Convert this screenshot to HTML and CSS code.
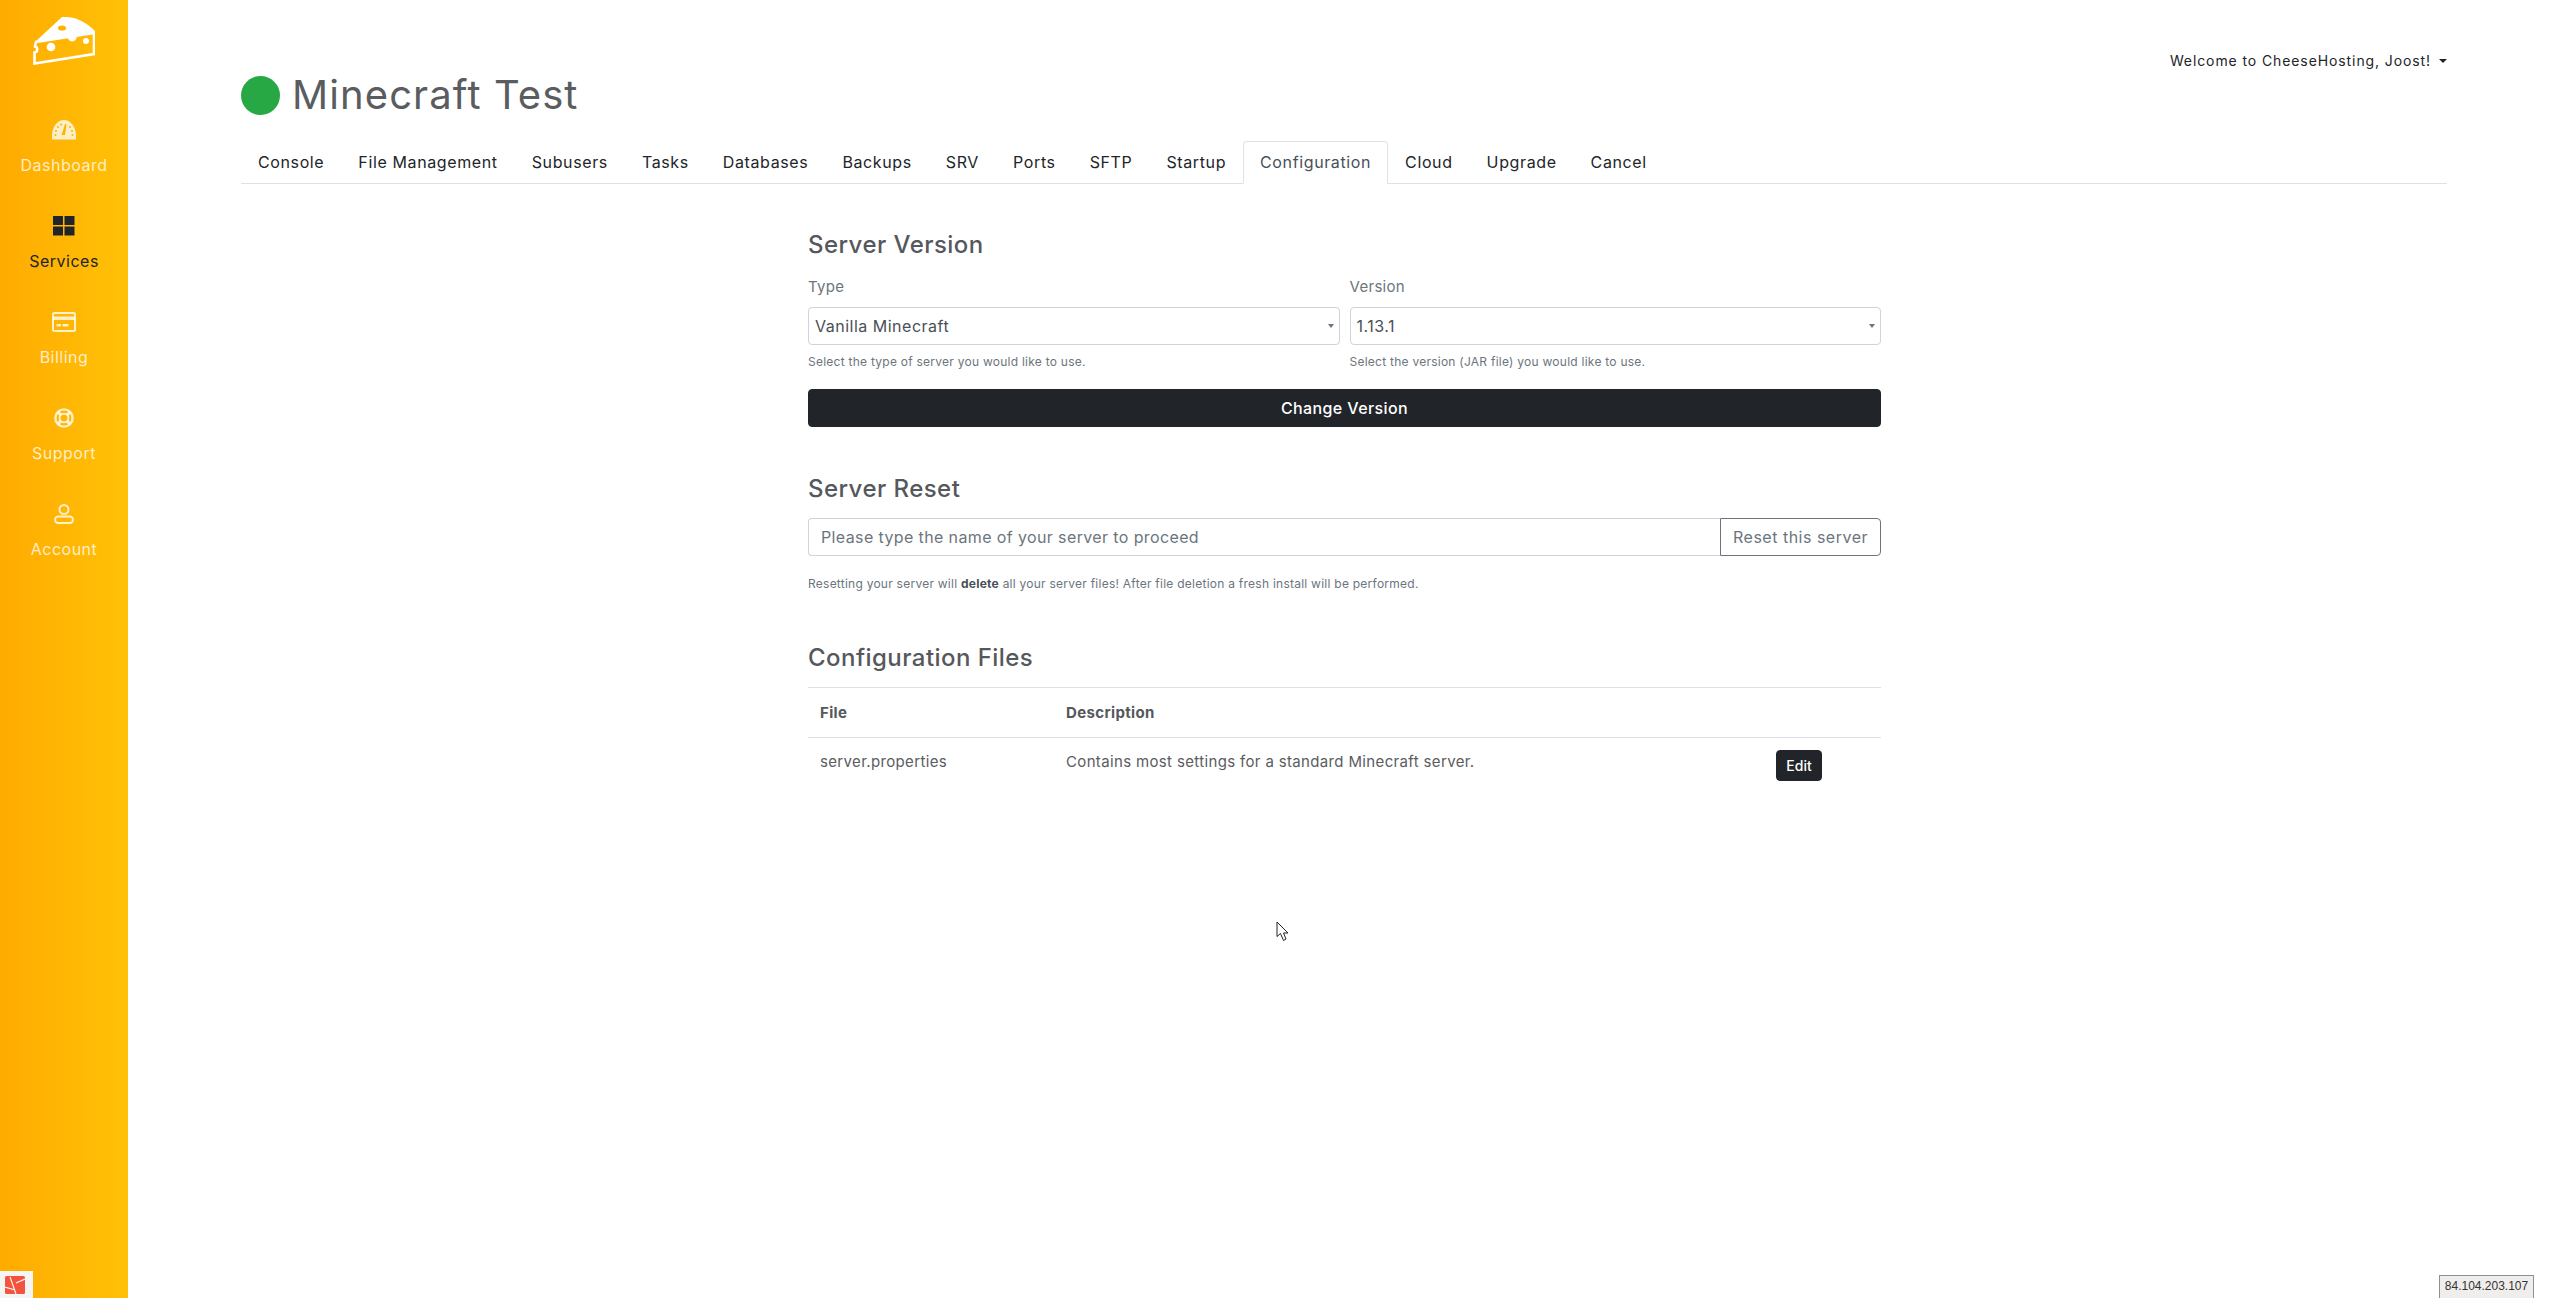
FILE: index.html
```html
<!DOCTYPE html>
<html lang="en">
<head>
  <meta charset="UTF-8">
  <meta name="viewport" content="width=device-width, initial-scale=1.0">
  <title>Minecraft Test</title>
  <link rel="stylesheet" href="styles.css">
</head>
<body>

  <!-- Sidebar -->
  <aside class="sidebar">
    <a class="logo" href="#">
      <svg width="62" height="48" viewBox="0 0 62 48">
        <path d="M2 25 L29 0 C43 -1 54 6 62 14 L62 16 Z" fill="#fff"/>
        <path d="M3 25 L61 16 V37 L1.500 46.500 V35.500 C5 35 5 30 2 29.500 Z" fill="none" stroke="#fff" stroke-width="2.600"/>
        <ellipse cx="29" cy="11" rx="4" ry="2.600" fill="#ffb300"/>
        <path d="M34.500 19 C34.500 26.500 44.500 26.500 44 17.500 Z" fill="#fff"/>
        <circle cx="18" cy="30" r="4.300" fill="#fff"/>
        <circle cx="53" cy="24" r="3" fill="#fff"/>
      </svg>
    </a>
    <a class="side-item" href="#">
      <svg width="24" height="20" viewBox="0 0 24 20">
        <path d="M0 19 C-1 8 5 0 12 0 C19 0 25 8 24 19 Q24 19.500 23 19.500 H1 Q0 19.500 0 19 Z" fill="currentColor"/>
        <g fill="#ffb300">
          <path d="M13 4 L14.500 4.300 L13 15 L9.500 15 L11.500 9 Z"/>
          <circle cx="6" cy="7" r="1"/><circle cx="9" cy="4.500" r="1"/><circle cx="18" cy="7" r="1"/>
          <circle cx="4" cy="11" r="1"/><circle cx="20" cy="11" r="1"/><circle cx="3.500" cy="15" r="1"/><circle cx="20.500" cy="15" r="1"/>
        </g>
      </svg>
      <span>Dashboard</span>
    </a>
    <a class="side-item active" href="#">
      <svg width="22" height="20" viewBox="0 0 22 20" fill="currentColor">
        <rect x="0" y="0" width="10" height="9"/><rect x="11.500" y="0" width="10" height="9"/>
        <rect x="0" y="10.500" width="10" height="9"/><rect x="11.500" y="10.500" width="10" height="9"/>
      </svg>
      <span>Services</span>
    </a>
    <a class="side-item" href="#">
      <svg width="24" height="20" viewBox="0 0 24 20">
        <rect x="1" y="1" width="22" height="18" rx="1.500" fill="none" stroke="currentColor" stroke-width="2"/>
        <rect x="1" y="4.500" width="22" height="3.500" fill="currentColor"/>
        <rect x="4.500" y="12" width="4.500" height="2.500" fill="currentColor"/>
        <rect x="10.500" y="12" width="6" height="2.500" fill="currentColor"/>
      </svg>
      <span>Billing</span>
    </a>
    <a class="side-item" href="#">
      <svg width="22" height="22" viewBox="0 0 22 22" fill="none" stroke="currentColor">
        <circle cx="11" cy="11" r="9.500" stroke-width="2.600"/>
        <circle cx="11" cy="11" r="4.800" stroke-width="2.200"/>
        <path d="M4.500 4.500 L7.500 7.500 M17.500 4.500 L14.500 7.500 M4.500 17.500 L7.500 14.500 M17.500 17.500 L14.500 14.500" stroke-width="3.600"/>
      </svg>
      <span>Support</span>
    </a>
    <a class="side-item" href="#">
      <svg width="20" height="20" viewBox="0 0 20 20" fill="none" stroke="currentColor" stroke-width="2">
        <circle cx="10" cy="5.500" r="4.500"/>
        <rect x="1" y="12.500" width="18" height="6.500" rx="3.200"/>
      </svg>
      <span>Account</span>
    </a>

    <!-- Debugbar tab -->
    <div class="debug-badge">
      <svg width="20" height="20" viewBox="0 0 20 20">
        <rect x="0" y="1" width="20" height="18" rx="1.500" fill="#f4533d"/>
        <path d="M0 12 L10 15 M5 2 L11 19 M11 8 L20 4" stroke="#f5f5f5" stroke-width="1.200" fill="none"/>
      </svg>
    </div>
  </aside>

  <!-- Main content -->
  <main class="content">
    <div class="top-row">
      <h1 class="server-title"><span class="status-dot"></span>Minecraft Test</h1>
      <a class="welcome" href="#">Welcome to CheeseHosting, Joost!<span class="caret"></span></a>
    </div>

    <nav class="tabs">
      <a class="tab" href="#">Console</a>
      <a class="tab" href="#">File Management</a>
      <a class="tab" href="#">Subusers</a>
      <a class="tab" href="#">Tasks</a>
      <a class="tab" href="#">Databases</a>
      <a class="tab" href="#">Backups</a>
      <a class="tab" href="#">SRV</a>
      <a class="tab" href="#">Ports</a>
      <a class="tab" href="#">SFTP</a>
      <a class="tab" href="#">Startup</a>
      <a class="tab active" href="#">Configuration</a>
      <a class="tab" href="#">Cloud</a>
      <a class="tab" href="#">Upgrade</a>
      <a class="tab" href="#">Cancel</a>
    </nav>

    <div class="panel">
      <!-- Server Version -->
      <section class="version-section">
        <h4>Server Version</h4>
        <div class="form-row">
          <div class="form-col">
            <label>Type</label>
            <div class="select-wrap">
              <select><option>Vanilla Minecraft</option></select>
            </div>
            <small>Select the type of server you would like to use.</small>
          </div>
          <div class="form-col">
            <label>Version</label>
            <div class="select-wrap">
              <select><option>1.13.1</option></select>
            </div>
            <small>Select the version (JAR file) you would like to use.</small>
          </div>
        </div>
        <button class="btn-dark btn-block">Change Version</button>
      </section>

      <!-- Server Reset -->
      <section class="reset-section">
        <h4>Server Reset</h4>
        <div class="input-group">
          <input type="text" placeholder="Please type the name of your server to proceed">
          <button class="btn-outline">Reset this server</button>
        </div>
        <small>Resetting your server will <b>delete</b> all your server files! After file deletion a fresh install will be performed.</small>
      </section>

      <!-- Configuration Files -->
      <section class="files-section">
        <h4>Configuration Files</h4>
        <table class="files-table">
          <thead>
            <tr><th class="col-file">File</th><th>Description</th><th class="col-edit"></th></tr>
          </thead>
          <tbody>
            <tr>
              <td>server.properties</td>
              <td>Contains most settings for a standard Minecraft server.</td>
              <td><button class="btn-dark btn-sm">Edit</button></td>
            </tr>
          </tbody>
        </table>
      </section>
    </div>
  </main>

  <div class="ip-box">84.104.203.107</div>

  <svg class="cursor" width="13" height="21" viewBox="0 0 13 21">
    <path d="M1 1 V15.500 L4.500 12.500 L7.500 19.500 L10 18 L7.500 12 L12 12 Z" fill="#fff" stroke="#222" stroke-width="1"/>
  </svg>

</body>
</html>
```

FILE: styles.css
```css
/* General Reset */
* {
  margin: 0;
  padding: 0;
  box-sizing: border-box;
}

html, body {
  height: 100%;
}

body {
  font-family: Inter, "Noto Sans", sans-serif;
  font-size: 16px;
  color: #212529;
  background-color: #fff;
  display: flex;
  min-height: 1298px;
  overflow: hidden;
}

a {
  color: inherit;
  text-decoration: none;
}

/* Sidebar */
.sidebar {
  position: relative;
  width: 128px;
  flex-shrink: 0;
  background: linear-gradient(90deg, #ffab00, #ffc107);
  display: flex;
  flex-direction: column;
  align-items: center;
}

.logo {
  display: block;
  height: 48px;
  margin-top: 17px;
  margin-bottom: 55px;
}

.side-item {
  display: flex;
  flex-direction: column;
  align-items: center;
  justify-content: flex-start;
  height: 96px;
  color: rgba(255, 255, 255, 0.78);
  letter-spacing: 0.5px;
}

.side-item svg {
  height: 20px;
  flex-shrink: 0;
}

.side-item span {
  margin-top: 15px;
  line-height: 20px;
}

.side-item.active {
  color: #212529;
}

.debug-badge {
  position: absolute;
  left: 0;
  bottom: 0;
  width: 33px;
  height: 27px;
  background-color: #f5f5f5;
  padding: 4px 0 0 5px;
}

/* Main content */
.content {
  flex: 1;
  padding: 0 113px;
}

.top-row {
  display: flex;
  justify-content: space-between;
  align-items: flex-start;
  height: 141px;
}

.server-title {
  display: flex;
  align-items: center;
  margin-top: 71px;
  font-size: 40px;
  font-weight: 400;
  line-height: 48px;
  color: #5a5c60;
  letter-spacing: 1.1px;
}

.status-dot {
  width: 39px;
  height: 39px;
  border-radius: 50%;
  background-color: #28a745;
  margin-right: 12px;
}

.welcome {
  display: flex;
  align-items: center;
  margin-top: 51px;
  font-size: 14px;
  line-height: 20px;
  letter-spacing: 0.9px;
}

.caret {
  width: 0;
  height: 0;
  margin-left: 8px;
  border-top: 4px solid #212529;
  border-left: 4px solid transparent;
  border-right: 4px solid transparent;
}

/* Tabs */
.tabs {
  display: flex;
  height: 43px;
  border-bottom: 1px solid #dee2e6;
}

.tab {
  height: 43px;
  padding: 8px 16px;
  border: 1px solid transparent;
  border-radius: 4px 4px 0 0;
  line-height: 24px;
  letter-spacing: 0.62px;
}

.tab.active {
  color: #495057;
  background-color: #fff;
  border-color: #dee2e6 #dee2e6 #fff;
}

/* Panel */
.panel {
  width: 1073px;
  margin-left: 567px;
  color: #5a5c60;
}

h4 {
  font-size: 24px;
  font-weight: 500;
  line-height: 28px;
  color: #55585c;
  letter-spacing: 0.45px;
}

small {
  display: block;
  font-size: 12px;
  line-height: 18px;
  color: #6c757d;
  letter-spacing: 0.25px;
}

small b {
  font-weight: 700;
  color: #495057;
}

.version-section {
  padding-top: 47px;
}

.form-row {
  display: flex;
  gap: 10px;
  margin-top: 18px;
}

.form-col {
  flex: 1;
}

.form-col label {
  display: block;
  font-size: 15px;
  line-height: 20px;
  margin-bottom: 10px;
  color: #6c757d;
  letter-spacing: 0.3px;
}

.select-wrap {
  position: relative;
}

.select-wrap::after {
  content: "";
  position: absolute;
  right: 6px;
  top: 17px;
  border-top: 4px solid #6c757d;
  border-left: 3px solid transparent;
  border-right: 3px solid transparent;
}

select {
  display: block;
  width: 100%;
  height: 38px;
  padding: 0 20px 0 6px;
  font-family: inherit;
  font-size: 16px;
  color: #495057;
  background-color: #fff;
  border: 1px solid #ced4da;
  border-radius: 4px;
  appearance: none;
  letter-spacing: 0.5px;
}

.form-col small {
  margin-top: 8px;
}

.btn-dark {
  font-family: inherit;
  color: #fff;
  background-color: #212529;
  border: 1px solid #212529;
  border-radius: 4px;
  font-weight: 500;
}

.btn-block {
  display: block;
  width: 100%;
  height: 38px;
  margin-top: 18px;
  font-size: 16px;
  letter-spacing: 0.4px;
}

.reset-section {
  padding-top: 48px;
}

.input-group {
  display: flex;
  margin-top: 15px;
}

.input-group input {
  flex: 1;
  height: 38px;
  padding: 0 12px;
  font-family: inherit;
  font-size: 16px;
  color: #495057;
  border: 1px solid #ced4da;
  border-right: none;
  border-radius: 4px 0 0 4px;
  letter-spacing: 0.38px;
}

.input-group input::placeholder {
  color: #6c757d;
  opacity: 1;
}

.btn-outline {
  width: 161px;
  height: 38px;
  font-family: inherit;
  font-size: 16px;
  color: #6c757d;
  background-color: #fff;
  border: 1px solid #6c757d;
  border-radius: 0 4px 4px 0;
  letter-spacing: 0.5px;
}

.reset-section small {
  margin-top: 19px;
}

.files-section {
  padding-top: 51px;
}

.files-table {
  width: 100%;
  margin-top: 15px;
  border-collapse: collapse;
  table-layout: fixed;
  font-size: 15px;
  letter-spacing: 0.35px;
}

.files-table th {
  height: 50px;
  padding: 0 12px;
  text-align: left;
  font-weight: 700;
  border-top: 1px solid #dee2e6;
  border-bottom: 1px solid #dee2e6;
  color: #55585c;
}

.files-table td {
  padding: 12px;
  vertical-align: top;
  line-height: 24px;
}

.col-file {
  width: 246px;
}

.col-edit {
  width: 117px;
}

.btn-sm {
  display: block;
  width: 46px;
  height: 31px;
  font-size: 14px;
}

/* Overlays */
.ip-box {
  position: absolute;
  right: 26px;
  bottom: 0;
  width: 95px;
  height: 23px;
  padding-top: 3px;
  text-align: center;
  font-family: "Liberation Sans", sans-serif;
  font-size: 12px;
  color: #333;
  background-color: #f0eded;
  border: 1px solid #8f8f8f;
  border-bottom: none;
}

.cursor {
  position: absolute;
  left: 1276px;
  top: 921px;
}
```
